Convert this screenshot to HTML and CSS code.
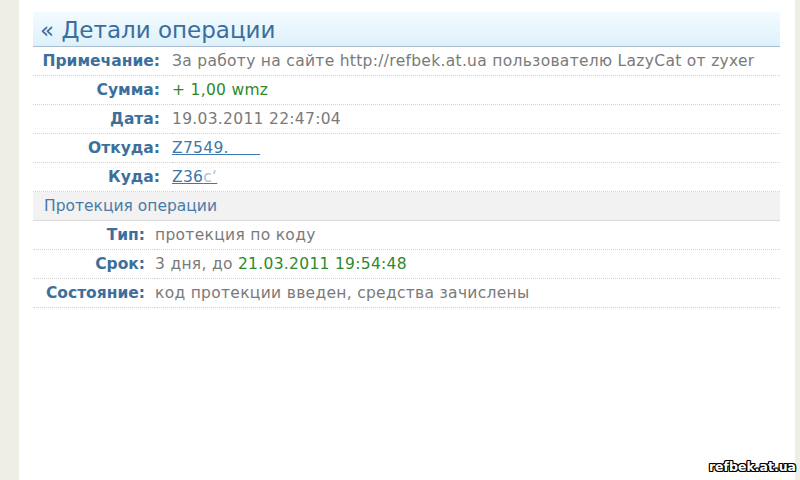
FILE: index.html
```html
<!DOCTYPE html>
<html lang="ru">
<head>
    <meta charset="UTF-8">
    <title>Детали операции</title>
    <link rel="stylesheet" href="styles.css">
</head>
<body>

    <div class="side-left"></div>

    <div class="main">
        <div class="box">
            <!-- Заголовок -->
            <h1 class="box-title">&laquo; Детали операции</h1>

            <table class="details first">
                <tr>
                    <th>Примечание:</th>
                    <td>За работу на сайте http://refbek.at.ua пользователю LazyCat от zyxer</td>
                </tr>
                <tr>
                    <th>Сумма:</th>
                    <td class="green">+ 1,00 wmz</td>
                </tr>
                <tr>
                    <th>Дата:</th>
                    <td>19.03.2011 22:47:04</td>
                </tr>
                <tr>
                    <th>Откуда:</th>
                    <td><a href="#">Z7549.&nbsp;&nbsp;&nbsp;&nbsp;&nbsp;&nbsp;</a></td>
                </tr>
                <tr>
                    <th>Куда:</th>
                    <td><a href="#">Z36<span class="blur">c&#8216;</span></a></td>
                </tr>
            </table>

            <div class="section">Протекция операции</div>

            <table class="details second">
                <tr>
                    <th>Тип:</th>
                    <td>протекция по коду</td>
                </tr>
                <tr>
                    <th>Срок:</th>
                    <td>3 дня, до <span class="green">21.03.2011 19:54:48</span></td>
                </tr>
                <tr>
                    <th>Состояние:</th>
                    <td>код протекции введен, средства зачислены</td>
                </tr>
            </table>
        </div>

        <div class="watermark">refbek.at.ua</div>
    </div>

    <div class="side-right"></div>

</body>
</html>
```

FILE: styles.css
```css
/* общий фон страницы */
body {
    margin: 0;
    padding: 0;
    display: flex;
    height: 480px;
    overflow: hidden;
    background-color: #fff;
    font-family: "DejaVu Sans", Verdana, sans-serif;
}

.side-left {
    width: 19px;
    background-color: #efeee6;
}

.side-right {
    width: 5px;
    background-color: #efeee6;
}

.main {
    flex: 1;
    position: relative;
    padding: 12px 15px 0 14px;
}

/* заголовок блока */
.box-title {
    margin: 0;
    height: 34px;
    line-height: 36px;
    padding-left: 7px;
    font-size: 23px;
    font-weight: normal;
    color: #3b6e9c;
    background: linear-gradient(to bottom, #f3fbff, #def1fb);
    border-bottom: 1px solid #a9bccd;
}

/* таблица с деталями */
.details {
    width: 100%;
    border-collapse: collapse;
    font-size: 15.5px;
}

.details th,
.details td {
    height: 28px;
    line-height: 28px;
    padding: 0;
    border-bottom: 1px dotted #d4d4d4;
    vertical-align: top;
}

.details th {
    text-align: right;
    font-weight: bold;
    color: #3d6f9b;
    white-space: nowrap;
}

.details td {
    color: #7a7a7a;
    letter-spacing: 0.3px;
}

.first th {
    width: 127px;
    padding-right: 12px;
}

.second th {
    width: 112px;
    padding-right: 10px;
}

.green {
    color: #2c8a2c !important;
}

.details a {
    color: #3a78ad;
    text-decoration: underline;
}

.blur {
    color: #a9bfd3;
}

/* заголовок секции */
.section {
    height: 28px;
    line-height: 28px;
    padding-left: 11px;
    font-size: 15.5px;
    color: #4a7aa8;
    background-color: #f2f2f2;
    border-bottom: 1px solid #dcdcdc;
}

/* водяной знак */
.watermark {
    position: absolute;
    right: -1px;
    bottom: 6px;
    font-family: "DejaVu Sans", sans-serif;
    font-weight: bold;
    font-size: 12.5px;
    color: #fff;
    text-shadow: 1px 0 0 #000, -1px 0 0 #000, 0 1px 0 #000, 0 -1px 0 #000,
                 1px 1px 0 #000, -1px -1px 0 #000, 1px -1px 0 #000, -1px 1px 0 #000;
}
```
